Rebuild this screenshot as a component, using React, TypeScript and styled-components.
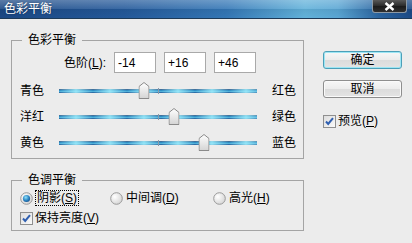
import React from "react";
import styled, { createGlobalStyle } from "styled-components";

const GlobalStyle = createGlobalStyle`
  html, body {
    margin: 0;
    padding: 0;
    background: #ececec;
  }
  body {
    font-family: "Liberation Sans", "Noto Sans CJK SC", sans-serif;
    font-size: 12px;
    color: #000;
  }
`;

const Window = styled.div`
  width: 412px;
  height: 243px;
  background: #ececec;
  overflow: hidden;
  display: flex;
  flex-direction: column;
`;

const TitleBar = styled.div`
  height: 18px;
  display: flex;
  justify-content: space-between;
  align-items: flex-start;
  border-bottom: 1px solid #1d3a58;
  background:
    linear-gradient(to bottom, rgba(255, 255, 255, 0.28) 0%, rgba(255, 255, 255, 0.1) 48%, rgba(0, 0, 0, 0.06) 52%, rgba(0, 0, 0, 0) 100%),
    linear-gradient(to right, #1b4884 0%, #24599a 30%, #3477b6 55%, #62b2da 74%, #5aa6d4 82%, #2a64a0 92%, #1b4a86 100%);
`;

const Title = styled.span`
  padding-left: 4px;
  line-height: 18px;
  color: #fff;
  font-size: 12px;
  text-shadow: 0 0 2px rgba(0, 0, 0, 0.4);
`;

const CloseButton = styled.div`
  width: 35px;
  height: 13px;
  margin-right: 5px;
  box-sizing: border-box;
  display: flex;
  align-items: center;
  justify-content: center;
  border: 1px solid #8d99a4;
  border-top: none;
  border-radius: 0 0 3px 3px;
  background: linear-gradient(#585858, #2a2a2a 50%, #1a1a1a 51%, #303030);
`;

const Body = styled.div`
  display: flex;
  gap: 19px;
  padding: 14px 0 0 11px;
`;

const LeftColumn = styled.div`
  width: 293px;
  display: flex;
  flex-direction: column;
  gap: 14px;
`;

const Group = styled.fieldset`
  margin: 0;
  padding: 0;
  min-width: 0;
  border: 1px solid #a4a4a4;
`;

const Legend = styled.legend`
  margin-left: 10px;
  padding: 0 6px;
  font-size: 12px;
  line-height: 14px;
`;

const GroupInner = styled.div<{ $pad: string }>`
  padding: ${(p) => p.$pad};
`;

const LevelsRow = styled.div`
  display: flex;
  align-items: center;
  height: 21px;
`;

const LevelsLabel = styled.span`
  width: 94px;
  box-sizing: border-box;
  padding-right: 8px;
  text-align: right;
  line-height: 16px;
`;

const NumberBox = styled.input`
  width: 42px;
  height: 21px;
  box-sizing: border-box;
  margin: 0 8px 0 0;
  padding: 0 3px;
  border: 1px solid #a9a9a9;
  background: #fff;
  font-family: "Liberation Sans", sans-serif;
  font-size: 12px;
  color: #000;
  outline: none;
`;

const SliderRow = styled.div`
  display: grid;
  grid-template-columns: 39px 198px 1fr;
  align-items: center;
  height: 26px;
`;

const SideLabel = styled.span<{ $right?: boolean }>`
  line-height: 16px;
  padding-left: ${(p) => (p.$right ? "15px" : "0")};
`;

const Track = styled.div`
  position: relative;
  height: 4px;
  background:
    repeating-linear-gradient(90deg, rgba(160, 238, 252, 0) 0px, rgba(160, 238, 252, 0.85) 17px, rgba(160, 238, 252, 0) 34px),
    linear-gradient(#3f6e9a 0, #3f6e9a 25%, #2c8cc4 25%, #2c8cc4 50%, #4eaed8 50%, #4eaed8 75%, #2a6ca6 75%);
`;

const CenterTick = styled.div`
  position: absolute;
  left: 50%;
  top: -1px;
  width: 1px;
  height: 6px;
  background: #8a9aaa;
`;

const Thumb = styled.svg`
  position: absolute;
  top: -7px;
  transform: translateX(-50%);
`;

const RightColumn = styled.div`
  width: 79px;
  display: flex;
  flex-direction: column;
  padding-top: 18px;
`;

const Button = styled.div<{ $default?: boolean }>`
  height: 18px;
  box-sizing: border-box;
  display: flex;
  align-items: center;
  justify-content: center;
  border: 1px solid ${(p) => (p.$default ? "#4c9fb8" : "#8e8e8e")};
  border-radius: 3px;
  box-shadow: ${(p) => (p.$default ? "inset 0 0 0 1px #9de6f4" : "inset 0 0 0 1px #fafafa")};
  background: linear-gradient(#f7f7f7, #ececec 48%, #dcdcdc 52%, #e4e4e4);
  font-size: 12px;
  line-height: 16px;
  margin-bottom: ${(p) => (p.$default ? "11px" : "15px")};
`;

const CheckLine = styled.label<{ $gap: number }>`
  display: flex;
  align-items: center;
  gap: ${(p) => p.$gap}px;
  height: 16px;
  line-height: 16px;
`;

const RadioRow = styled.div`
  display: grid;
  grid-template-columns: 90px 103px auto;
  height: 16px;
  align-items: center;
`;

const Option = styled.label<{ $gap: number }>`
  display: flex;
  align-items: center;
  gap: ${(p) => p.$gap}px;
  line-height: 14px;
`;

const FocusText = styled.span`
  border: 1px dotted #000;
  padding: 0 1px;
`;

const KeepRow = styled.div`
  margin-top: 4px;
`;

const CheckBox = () => (
  <svg width="13" height="13" viewBox="0 0 13 13">
    <defs>
      <linearGradient id="cbfill" x1="0" y1="0" x2="1" y2="1">
        <stop offset="0" stopColor="#dcdcdc" />
        <stop offset="1" stopColor="#fbfbfb" />
      </linearGradient>
    </defs>
    <rect x="0.5" y="0.5" width="12" height="12" fill="url(#cbfill)" stroke="#8f8f8f" />
    <path d="M3 6.5 L5.2 9 L10 3.2" fill="none" stroke="#2f5fb0" strokeWidth="2" />
  </svg>
);

const Radio = ({ checked }: { checked?: boolean }) => (
  <svg width="13" height="13" viewBox="0 0 13 13">
    <defs>
      <radialGradient id="rfill" cx="0.35" cy="0.35" r="0.8">
        <stop offset="0" stopColor="#ffffff" />
        <stop offset="1" stopColor="#cfcfcf" />
      </radialGradient>
      <radialGradient id="rdot" cx="0.4" cy="0.35" r="0.7">
        <stop offset="0" stopColor="#8fe0f8" />
        <stop offset="0.6" stopColor="#2c86c4" />
        <stop offset="1" stopColor="#16508c" />
      </radialGradient>
    </defs>
    <circle cx="6.5" cy="6.5" r="5.8" fill="url(#rfill)" stroke="#9a9a9a" strokeWidth="1" />
    {checked && <circle cx="6.5" cy="6.5" r="3.6" fill="url(#rdot)" />}
  </svg>
);

const sliders = [
  { left: "青色", right: "红色", value: -14 },
  { left: "洋红", right: "绿色", value: 16 },
  { left: "黄色", right: "蓝色", value: 46 },
];

export default function App() {
  return (
    <>
      <GlobalStyle />
      <Window>
        <TitleBar>
          <Title>色彩平衡</Title>
          <CloseButton>
            <svg width="11" height="9" viewBox="0 0 11 9">
              <path d="M1.5 1 L9.5 8 M9.5 1 L1.5 8" stroke="#fff" strokeWidth="2.4" />
            </svg>
          </CloseButton>
        </TitleBar>
        <Body>
          <LeftColumn>
            <Group>
              <Legend>色彩平衡</Legend>
              <GroupInner $pad="5px 0 2px 8px">
                <LevelsRow>
                  <LevelsLabel>
                    色阶(<u>L</u>):
                  </LevelsLabel>
                  <NumberBox readOnly value="-14" />
                  <NumberBox readOnly value="+16" />
                  <NumberBox readOnly value="+46" />
                </LevelsRow>
                <div style={{ height: 5 }} />
                {sliders.map((s) => (
                  <SliderRow key={s.left}>
                    <SideLabel>{s.left}</SideLabel>
                    <Track>
                      <CenterTick />
                      <Thumb
                        width="11"
                        height="17"
                        viewBox="0 0 11 17"
                        style={{ left: `${50 + s.value / 2}%` }}
                      >
                        <defs>
                          <linearGradient id="thumbfill" x1="0" y1="0" x2="0" y2="1">
                            <stop offset="0" stopColor="#ffffff" />
                            <stop offset="1" stopColor="#d4d4d4" />
                          </linearGradient>
                        </defs>
                        <path
                          d="M0.5 16.5 V4.5 L5.5 0.5 L10.5 4.5 V16.5 Z"
                          fill="url(#thumbfill)"
                          stroke="#8a8a8a"
                        />
                      </Thumb>
                    </Track>
                    <SideLabel $right>{s.right}</SideLabel>
                  </SliderRow>
                ))}
              </GroupInner>
            </Group>
            <Group>
              <Legend>色调平衡</Legend>
              <GroupInner $pad="3px 0 4px 8px">
                <RadioRow>
                  <Option $gap={2}>
                    <Radio checked />
                    <FocusText>
                      阴影(<u>S</u>)
                    </FocusText>
                  </Option>
                  <Option $gap={3}>
                    <Radio />
                    <span>
                      中间调(<u>D</u>)
                    </span>
                  </Option>
                  <Option $gap={3}>
                    <Radio />
                    <span>
                      高光(<u>H</u>)
                    </span>
                  </Option>
                </RadioRow>
                <KeepRow>
                  <CheckLine $gap={2}>
                    <CheckBox />
                    <span>
                      保持亮度(<u>V</u>)
                    </span>
                  </CheckLine>
                </KeepRow>
              </GroupInner>
            </Group>
          </LeftColumn>
          <RightColumn>
            <Button $default>确定</Button>
            <Button>取消</Button>
            <CheckLine $gap={2}>
              <CheckBox />
              <span>
                预览(<u>P</u>)
              </span>
            </CheckLine>
          </RightColumn>
        </Body>
      </Window>
    </>
  );
}
